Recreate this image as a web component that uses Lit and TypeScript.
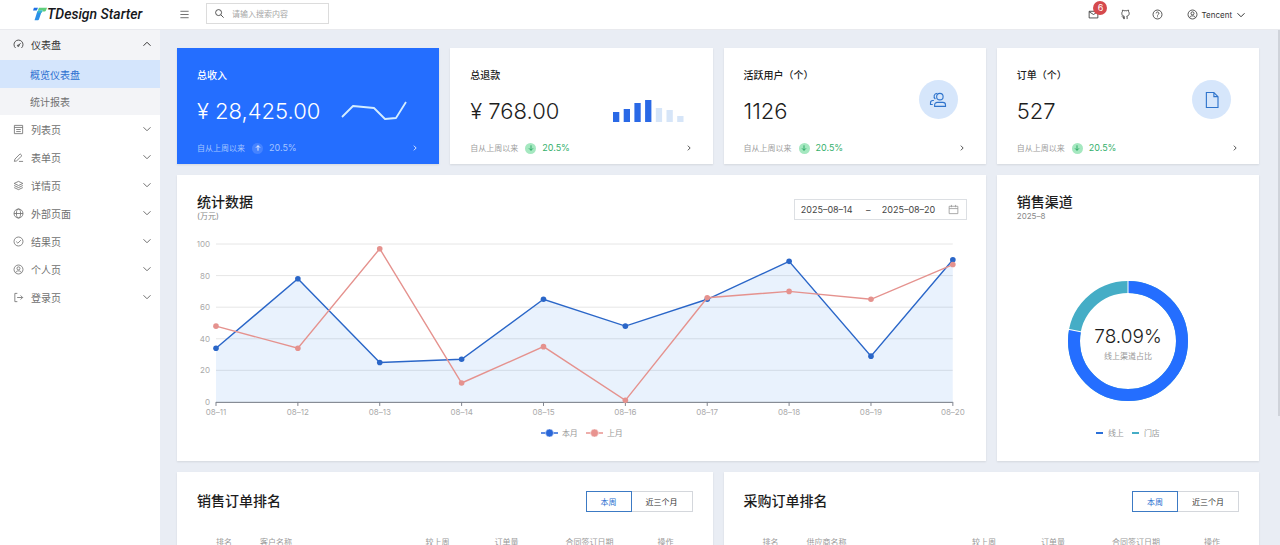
import { LitElement, html, svg, css } from "lit";
import { customElement, property, state } from "lit/decorators.js";
import { classMap } from "lit/directives/class-map.js";

const icons: Record<string, unknown> = {
  menu: svg`<path d="M3 5h18M3 12h18M3 19h18"/>`,
  search: svg`<circle cx="10" cy="10" r="6.5"/><path d="M15 15l6 6"/>`,
  mail: svg`<path d="M2.500 5h19v14.500h-19zM2.500 6l9.500 6 9.500-6"/>`,
  github: svg`<path d="M9 22v-4.200c-3 .7-4-1.300-5.500-2M15.500 22v-4.500c0-.8-.2-1.500-.7-2 3.200-.4 5.200-2 5.200-6 0-1.500-.4-2.600-1.300-3.500.3-1 .3-2.300-.2-3.500-1.300 0-2.600.7-3.500 1.400a13 13 0 0 0-6 0C8 3.200 6.800 2.500 5.500 2.500c-.5 1.200-.5 2.500-.2 3.500C4.400 6.900 4 8 4 9.500c0 4 2 5.600 5.200 6-.5.500-.7 1.200-.7 2V22"/>`,
  help: svg`<circle cx="12" cy="12" r="9.800"/><path d="M9 9.500a3 3 0 1 1 4.500 2.600c-1 .6-1.500 1-1.500 2.200M12 16.200v1.800"/>`,
  user: svg`<circle cx="12" cy="12" r="9.800"/><circle cx="12" cy="9.500" r="3.300"/><path d="M6 19c.5-3 2.500-4 6-4s5.500 1 6 4"/>`,
  up: svg`<path d="M5 15.500l7-7 7 7"/>`,
  down: svg`<path d="M5 8.500l7 7 7-7"/>`,
  right: svg`<path d="M8.500 5l7 7-7 7"/>`,
  dashboard: svg`<path d="M5.500 19.500a9.800 9.800 0 1 1 13 0M12 14.500l4.500-5.500"/><circle cx="11.500" cy="14.500" r="1.800"/>`,
  list: svg`<path d="M3 3h18v18H3zM3 7.500h18M7 12h10M7 16.500h10"/>`,
  form: svg`<path d="M3 20.500l1.200-5L15.500 4l4 4L8 19.300zM13 20.500h9"/>`,
  layers: svg`<path d="M12 3l9.500 4.500L12 12 2.500 7.500zM2.500 12l9.500 4.500 9.500-4.500M2.500 16.500L12 21l9.500-4.500"/>`,
  globe: svg`<circle cx="12" cy="12" r="9.800"/><ellipse cx="12" cy="12" rx="4.500" ry="9.800"/><path d="M2.200 12h19.600"/>`,
  check: svg`<circle cx="12" cy="12" r="9.800"/><path d="M7 12.200l3.600 3.500L17.200 9"/>`,
  logout: svg`<path d="M9.500 3H4v18h5.500M9 12h12M16.500 7.500L21 12l-4.500 4.500"/>`,
  calendar: svg`<path d="M2.500 5h19v16h-19zM2.500 10h19M7.500 2v5M16.500 2v5"/>`,
  arrowUp: svg`<path d="M12 20V5M6 11l6-6 6 6"/>`,
  arrowDown: svg`<path d="M12 4v15M6 13l6 6 6-6"/>`,
  group: svg`<circle cx="14.500" cy="7.500" r="4.300"/><path d="M7.500 20.500v-2c0-2 1.500-3.300 3.500-3.300h7.500c2 0 3.500 1.300 3.500 3.300v2zM11 3a4.200 4.200 0 0 0-2.500 7.600M5 18H2v-2.500c0-1.800 1.200-2.900 3-2.900h1.500"/>`,
  file: svg`<path d="M4.500 2h10l5.500 5.500V22H4.500zM14.500 2v5.500H20"/>`,
};

const icon = (name: string, size = "") => html`
  <svg class="icon ${size}" viewBox="0 0 24 24" aria-hidden="true">${icons[name]}</svg>`;

const shared = css`
  * { box-sizing: border-box; }
  .icon { width: 11px; height: 11px; flex: none; display: block; fill: none; stroke: currentColor; stroke-width: 1.8; }
  .icon.small { width: 8px; height: 8px; stroke-width: 2.5; }
  .icon.medium { width: 12px; height: 12px; stroke-width: 2; }
  .icon.large { width: 18px; height: 18px; stroke-width: 1.5; }
  button, input { font: inherit; color: inherit; border: 0; background: none; padding: 0; margin: 0; outline: none; }
  h2, h3, p, ul { margin: 0; padding: 0; }
  a { color: inherit; text-decoration: none; }
`;

@customElement("top-bar")
class TopBar extends LitElement {
  static styles = [shared, css`
    :host { display: flex; align-items: center; height: 30px; background: #fff; border-bottom: 1px solid #e9eaee; font-size: 9px; color: #333; }
    .logo { width: 160px; flex: none; display: flex; align-items: center; padding-left: 33px; padding-bottom: 1px; }
    .mark { width: 14px; height: 14px; }
    .name { font: italic 500 14px/20px Roboto, sans-serif; color: #16181c; white-space: nowrap; }
    .toggle { margin-left: 19px; color: #555; }
    .search { margin-left: 16px; width: 123px; height: 21px; border: 1px solid #dcdcdc; display: flex; align-items: center; gap: 7px; padding: 0 7px; margin-bottom: 2px; }
    .search input { width: 100%; min-width: 0; font-size: 8px; }
    .search input::placeholder { color: #a6a6a6; opacity: 1; }
    .actions { margin-left: auto; display: flex; align-items: center; padding-right: 33px; gap: 21px; }
    .action { position: relative; }
    .badge { position: absolute; left: 5px; top: -8px; width: 14px; height: 14px; border-radius: 7px; background: #d5494d; color: #fff; font-size: 9px; line-height: 14px; text-align: center; }
    .account { display: flex; align-items: center; gap: 3px; margin-left: 3px; font-size: 8px; }
  `];
  render() {
    return html`
      <a class="logo" href="#">
        <svg class="mark" viewBox="0 0 45 42" aria-hidden="true">
          <path d="M3 1h13l-4 9H0z" fill="#1f6fe5"/>
          <path d="M19 1h26l-3 8c-1 3-3 4-6 4h-6l2-4H16z" fill="#5fce7c"/>
          <path d="M14 12h14l-8 24c-1 3-3 5-6 5H5z" fill="#2b8fe8"/>
          <path d="M16 9h16l-4 8H14z" fill="#35b8c9"/>
        </svg>
        <span class="name">TDesign Starter</span>
      </a>
      <button class="toggle" aria-label="菜单">${icon("menu")}</button>
      <label class="search">${icon("search")}<input type="text" aria-label="搜索" placeholder="请输入搜索内容"></label>
      <div class="actions">
        <button class="action" aria-label="消息">${icon("mail")}<span class="badge">6</span></button>
        <button class="action" aria-label="代码仓库">${icon("github")}</button>
        <button class="action" aria-label="帮助">${icon("help")}</button>
        <button class="account">${icon("user")}<span>Tencent</span>${icon("down", "medium")}</button>
      </div>`;
  }
}

@customElement("side-menu")
class SideMenu extends LitElement {
  private entries = [
    ["list", "列表页"], ["form", "表单页"], ["layers", "详情页"], ["globe", "外部页面"],
    ["check", "结果页"], ["user", "个人页"], ["logout", "登录页"],
  ];
  static styles = [shared, css`
    :host { display: block; width: 160px; flex: none; background: #fff; font-size: 10px; color: #707070; }
    .group { background: #f3f4f7; }
    .item { width: 100%; height: 28px; display: flex; align-items: center; gap: 7px; padding: 0 7px 0 13px; text-align: left; }
    .item span { flex: 1; }
    .open { height: 30px; padding-bottom: 2px; color: #333; }
    .sub { display: flex; align-items: center; height: 27px; padding-left: 30px; }
    .active { height: 28px; background: #d4e5fc; color: #2a6fd0; }
  `];
  render() {
    return html`<nav>
      <div class="group">
        <button class="item open">${icon("dashboard")}<span>仪表盘</span>${icon("up", "medium")}</button>
        <a class="sub active" href="#">概览仪表盘</a>
        <a class="sub" href="#">统计报表</a>
      </div>
      ${this.entries.map(([i, t]) => html`
        <button class="item">${icon(i)}<span>${t}</span>${icon("down", "medium")}</button>`)}
    </nav>`;
  }
}

@customElement("stat-card")
class StatCard extends LitElement {
  @property() label = "";
  @property() value = "";
  @property() visual = "";
  @property({ type: Boolean, reflect: true }) primary = false;
  static styles = [shared, css`
    :host { display: flex; flex-direction: column; justify-content: space-between; gap: 18px; padding: 20px 20px 10px; background: #fff; box-shadow: 0 1px 2px #00000018; color: #1d1d1d; }
    :host([primary]) { background: #246eff; color: #fff; }
    .top { display: flex; justify-content: space-between; }
    .label { font-size: 10px; line-height: 14px; font-weight: 500; }
    .value { font-size: 22px; line-height: 26px; font-weight: 300; margin-top: 16px; white-space: nowrap; }
    .visual { display: flex; align-items: flex-end; padding-right: 8px; }
    .chart { display: block; height: 26px; }
    .line { width: 72px; }
    .bars { width: 72px; }
    .round { width: 39px; height: 39px; border-radius: 50%; background: #d6e6fb; color: #2f74cc; display: flex; align-items: center; justify-content: center; margin-bottom: 5px; }
    .foot { display: flex; align-items: center; gap: 6px; font-size: 8px; line-height: 12px; color: #a0a0a0; }
    .dot { width: 11px; height: 11px; border-radius: 50%; background: #a5e8c0; color: #18a058; display: flex; align-items: center; justify-content: center; margin-left: 1px; }
    .rate { color: #35b06c; font-size: 9px; }
    .more { margin-left: auto; color: #333; }
    :host([primary]) .foot, :host([primary]) .rate { color: #a3c4ff; }
    :host([primary]) .dot { background: #4583ff; color: #fff; }
    :host([primary]) .more { color: #fff; }
  `];
  private renderVisual() {
    if (this.visual === "line") return html`
      <svg class="chart line" viewBox="0 0 72 26" aria-hidden="true">
        <polyline points="3,19 14,8 35,10 46,21 57,20 67,4" fill="none" stroke="#d4edff" stroke-width="1.800" stroke-linejoin="round"/>
      </svg>`;
    if (this.visual === "bars") return html`
      <svg class="chart bars" viewBox="0 0 72 26" aria-hidden="true">
        ${[10, 13, 19, 22, 14, 12, 6].map((h, i) => svg`
          <rect x=${i * 10.7} y=${24 - h} width="6.300" height=${h} fill=${i < 4 ? "#2a69e6" : "#d6e5f8"}/>`)}
      </svg>`;
    return html`<span class="round">${icon(this.visual, "large")}</span>`;
  }
  render() {
    return html`
      <div class="top">
        <div><h3 class="label">${this.label}</h3><div class="value">${this.value}</div></div>
        <div class="visual">${this.renderVisual()}</div>
      </div>
      <div class="foot">
        <span>自从上周以来</span>
        <span class="dot">${icon(this.primary ? "arrowUp" : "arrowDown", "small")}</span>
        <span class="rate">20.5%</span>
        <button class="more" aria-label="详情">${icon("right", "small")}</button>
      </div>`;
  }
}

@customElement("trend-card")
class TrendCard extends LitElement {
  private current = [34, 78, 25, 27, 65, 48, 65, 89, 29, 90];
  private previous = [48, 34, 97, 12, 35, 1, 66, 70, 65, 87];
  static styles = [shared, css`
    :host { display: block; padding: 18px 19px 22px 20px; background: #fff; box-shadow: 0 1px 2px #00000018; }
    .head { display: flex; justify-content: space-between; align-items: flex-start; height: 33px; }
    .title { font-size: 14px; line-height: 18px; font-weight: 500; color: #1d1d1d; }
    .unit { font-size: 8px; line-height: 10px; color: #888; }
    .range { display: flex; align-items: center; width: 173px; height: 21px; margin-top: 6px; border: 1px solid #dcdfe3; padding: 0 7px 0 6px; font-size: 9px; color: #444; }
    .range input { width: 54px; }
    .dash { width: 27px; text-align: center; }
    .range .icon { margin-left: auto; color: #999; }
    .plot { display: block; width: 100%; height: auto; margin-top: 12px; overflow: visible; }
    .plot text { font-size: 8px; fill: #aaa; }
    .legend { display: flex; justify-content: center; gap: 8px; margin-top: 9px; font-size: 8px; line-height: 12px; color: #999; }
    .key { display: flex; align-items: center; gap: 4px; }
    .swatch { width: 17px; height: 8px; }
    .blue { color: #2a67d8; } .red { color: #e8938f; }
  `];
  private x = (i: number) => 19 + i * 81.9;
  private y = (v: number) => 164 - v * 1.58;
  private pts = (d: number[]) => d.map((v, i) => `${this.x(i)},${this.y(v)}`).join(" ");
  render() {
    const series = (d: number[], color: string) => svg`
      <polyline points=${this.pts(d)} fill="none" stroke=${color} stroke-width="1.400"/>
      ${d.map((v, i) => svg`<circle cx=${this.x(i)} cy=${this.y(v)} r="2.800" fill=${color}/>`)}`;
    const key = (cls: string, label: string) => html`
      <span class="key"><svg class="swatch ${cls}" viewBox="0 0 17 8" aria-hidden="true">
        <path d="M0 4h17" stroke="currentColor" stroke-width="1.500"/>
        <circle cx="8.500" cy="4" r="4" fill="currentColor" stroke="#fff" stroke-width="0.500"/></svg>${label}</span>`;
    return html`
      <div class="head">
        <div><h2 class="title">统计数据</h2><p class="unit">(万元)</p></div>
        <div class="range">
          <input type="text" aria-label="开始日期" value="2025–08–14">
          <span class="dash">–</span>
          <input type="text" aria-label="结束日期" value="2025–08–20">
          ${icon("calendar")}
        </div>
      </div>
      <svg class="plot" viewBox="0 0 770 180" role="img" aria-label="统计数据">
        ${[0, 20, 40, 60, 80, 100].map((v) => svg`
          <path d="M19 ${this.y(v)}h737" stroke="#e6e6e6"/>
          <text x="13" y=${this.y(v) + 3} text-anchor="end">${v}</text>`)}
        <polygon points="19,164 ${this.pts(this.current)} 756,164" fill="#2a7fe8" fill-opacity="0.100"/>
        <path d="M19 164.500h737" stroke="#7f858f"/>
        ${this.current.map((_, i) => svg`
          <path d="M${this.x(i)} 164v4" stroke="#7f858f"/>
          <text x=${this.x(i)} y="177" text-anchor="middle">08–${11 + i}</text>`)}
        ${series(this.current, "#2a66c8")}
        ${series(this.previous, "#e5928e")}
      </svg>
      <div class="legend">${key("blue", "本月")}${key("red", "上月")}</div>`;
  }
}

@customElement("channel-card")
class ChannelCard extends LitElement {
  @property({ type: Number }) share = 78.09;
  static styles = [shared, css`
    :host { display: flex; flex-direction: column; padding: 18px 20px 22px; background: #fff; box-shadow: 0 1px 2px #00000018; }
    .title { font-size: 14px; line-height: 18px; font-weight: 500; color: #1d1d1d; }
    .unit { font-size: 8px; line-height: 10px; color: #888; }
    .ring { display: block; width: 122px; height: 122px; margin: auto auto 25px; }
    .percent { font-size: 19px; font-weight: 300; fill: #1d1d1d; }
    .caption { font-size: 8px; fill: #999; }
    .legend { display: flex; justify-content: center; gap: 8px; font-size: 8px; line-height: 12px; color: #999; }
    .key { display: flex; align-items: center; gap: 5px; }
    .bar { width: 7px; height: 2px; background: #2a6fd8; }
    .teal { background: #45adc6; }
  `];
  render() {
    return html`
      <h2 class="title">销售渠道</h2>
      <p class="unit">2025–8</p>
      <svg class="ring" viewBox="0 0 122 122" role="img" aria-label="线上渠道占比">
        <g fill="none" stroke-width="12" transform="rotate(-90 61 61)">
          <circle cx="61" cy="61" r="54" stroke="#45adc6"/>
          <circle cx="61" cy="61" r="54" stroke="#246eff" pathLength="100" stroke-dasharray="${this.share} 100"/>
          <path d="M108 61h14" stroke="#fff" stroke-width="1"/>
          <path d="M108 61h14" stroke="#fff" stroke-width="1" transform="rotate(${this.share * 3.6} 61 61)"/>
        </g>
        <text class="percent" x="61" y="63" text-anchor="middle">${this.share}%</text>
        <text class="caption" x="61" y="79" text-anchor="middle">线上渠道占比</text>
      </svg>
      <div class="legend">
        <span class="key"><i class="bar"></i>线上</span>
        <span class="key"><i class="bar teal"></i>门店</span>
      </div>`;
  }
}

@customElement("rank-card")
class RankCard extends LitElement {
  @property() heading = "";
  @property() party = "";
  @state() private period = 0;
  static styles = [shared, css`
    :host { display: block; padding: 19px 20px; min-height: 240px; background: #fff; box-shadow: 0 1px 2px #00000018; }
    .head { display: flex; justify-content: space-between; align-items: center; }
    .title { font-size: 14px; line-height: 20px; font-weight: 500; color: #1d1d1d; }
    .tabs { display: flex; font-size: 8px; color: #333; }
    .tab { height: 21px; padding: 0 14px; border: 1px solid #d4d7dc; }
    .tab + .tab { border-left: 0; }
    .selected { border-color: #3c7ac4; color: #2a6fd0; }
    .tab + .selected { border-left: 1px solid #3c7ac4; }
    table { width: 100%; margin-top: 23px; border-collapse: collapse; table-layout: fixed; }
    th { padding: 0 0 0 9px; font-size: 8px; line-height: 14px; font-weight: 400; color: #999; text-align: left; white-space: nowrap; }
    .rank, .ops { width: 54px; padding: 0; text-align: center; }
    .trend { width: 69px; } .count { width: 71px; } .date { width: 82px; }
  `];
  render() {
    return html`
      <div class="head">
        <h2 class="title">${this.heading}</h2>
        <div class="tabs">
          ${["本周", "近三个月"].map((t, i) => html`
            <button class=${classMap({ tab: true, selected: this.period === i })} @click=${() => (this.period = i)}>${t}</button>`)}
        </div>
      </div>
      <table>
        <thead><tr>
          <th class="rank">排名</th><th>${this.party}</th><th class="trend">较上周</th>
          <th class="count">订单量</th><th class="date">合同签订日期</th><th class="ops">操作</th>
        </tr></thead>
      </table>`;
  }
}

@customElement("app-root")
class AppRoot extends LitElement {
  static styles = [shared, css`
    :host { display: flex; flex-direction: column; height: 100vh; overflow: hidden; background: #e9edf4; font-family: Inter, "Noto Sans CJK SC", sans-serif; }
    top-bar { flex: none; }
    .body { flex: 1; min-height: 0; display: flex; }
    .content { flex: 1; min-width: 0; overflow: hidden; padding: 18px 19px 18px 17px; display: grid; grid-template-columns: repeat(12, minmax(0, 1fr)); gap: 11px; align-content: start; }
    .quarter { grid-column: span 3; }
    .wide { grid-column: span 9; }
    .half { grid-column: span 6; }
    .rail { width: 2px; }
    .thumb { height: 75%; background: #cfd3da; }
  `];
  render() {
    return html`
      <top-bar></top-bar>
      <div class="body">
        <side-menu></side-menu>
        <main class="content">
          <stat-card class="quarter" primary label="总收入" value="¥ 28,425.00" visual="line"></stat-card>
          <stat-card class="quarter" label="总退款" value="¥ 768.00" visual="bars"></stat-card>
          <stat-card class="quarter" label="活跃用户（个）" value="1126" visual="group"></stat-card>
          <stat-card class="quarter" label="订单（个）" value="527" visual="file"></stat-card>
          <trend-card class="wide"></trend-card>
          <channel-card class="quarter"></channel-card>
          <rank-card class="half" heading="销售订单排名" party="客户名称"></rank-card>
          <rank-card class="half" heading="采购订单排名" party="供应商名称"></rank-card>
        </main>
        <div class="rail"><div class="thumb"></div></div>
      </div>`;
  }
}
